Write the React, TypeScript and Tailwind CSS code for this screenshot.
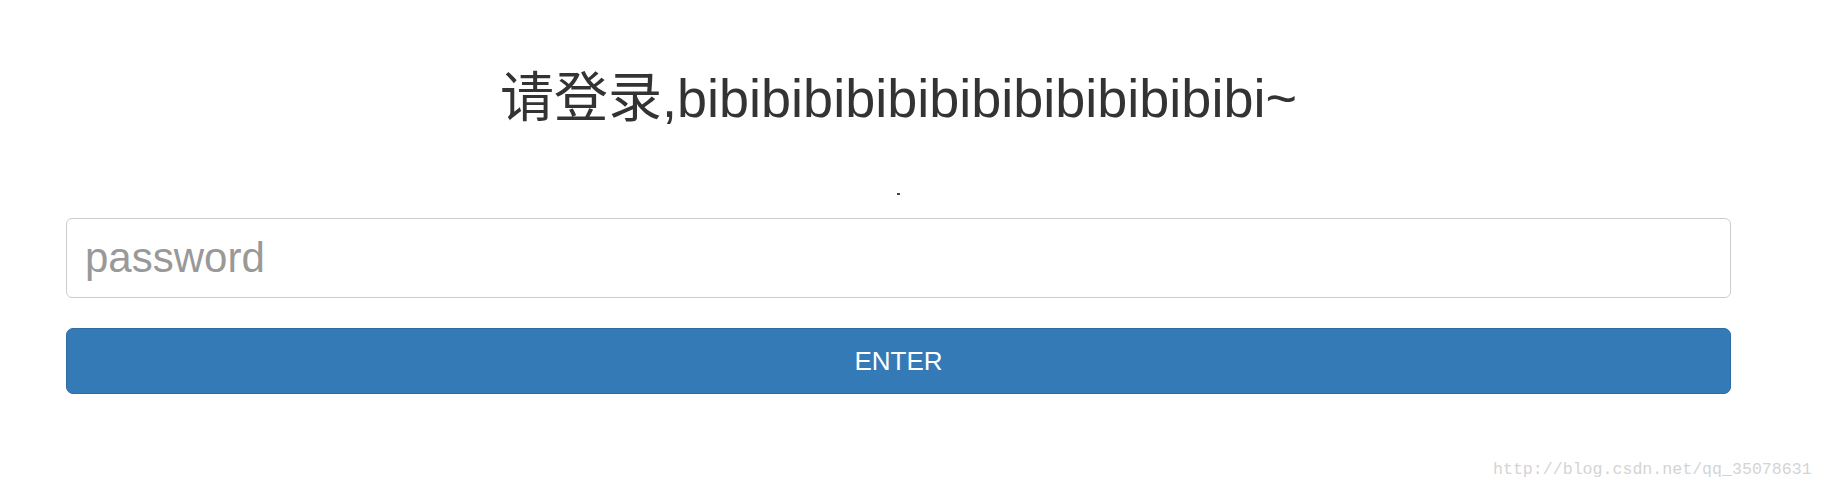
import React from 'react';

const LoginPage = () => {
  return (
    <div className="relative w-[1824px] h-[490px] bg-white overflow-hidden">
      <div className="ml-[66px] w-[1665px] pt-[68px]">
        <h1
          className="text-center text-[54px] leading-[60px] font-normal text-[#333]"
          style={{ fontFamily: '"Liberation Sans", "Noto Sans CJK SC", sans-serif' }}
        >
          请登录,bibibibibibibibibibibibibibi~
        </h1>

        <div className="flex justify-center mt-[65px] h-[2px]">
          <span className="block w-[3px] h-[2px] bg-[#334a5e]" />
        </div>

        <form className="mt-[23px] flex flex-col gap-[30px]">
          <input
            type="password"
            placeholder="password"
            className="block w-full h-[80px] px-[18px] rounded-[6px] border border-[#ccc] bg-white text-[42px] text-[#555] placeholder:text-[#999] outline-none"
            style={{ fontFamily: '"Liberation Sans", sans-serif' }}
          />
          <button
            type="button"
            className="block w-full h-[66px] rounded-[7px] bg-[#337ab7] border border-[#2e6da4] text-white text-[26px]"
            style={{ fontFamily: '"Liberation Sans", sans-serif' }}
          >
            ENTER
          </button>
        </form>
      </div>

      <div
        className="absolute left-[1493px] top-[458px] text-[16.6px] text-[#d4d4d4] whitespace-nowrap"
        style={{ fontFamily: '"Liberation Mono", monospace' }}
      >
        http://blog.csdn.net/qq_35078631
      </div>
    </div>
  );
};

export default LoginPage;
